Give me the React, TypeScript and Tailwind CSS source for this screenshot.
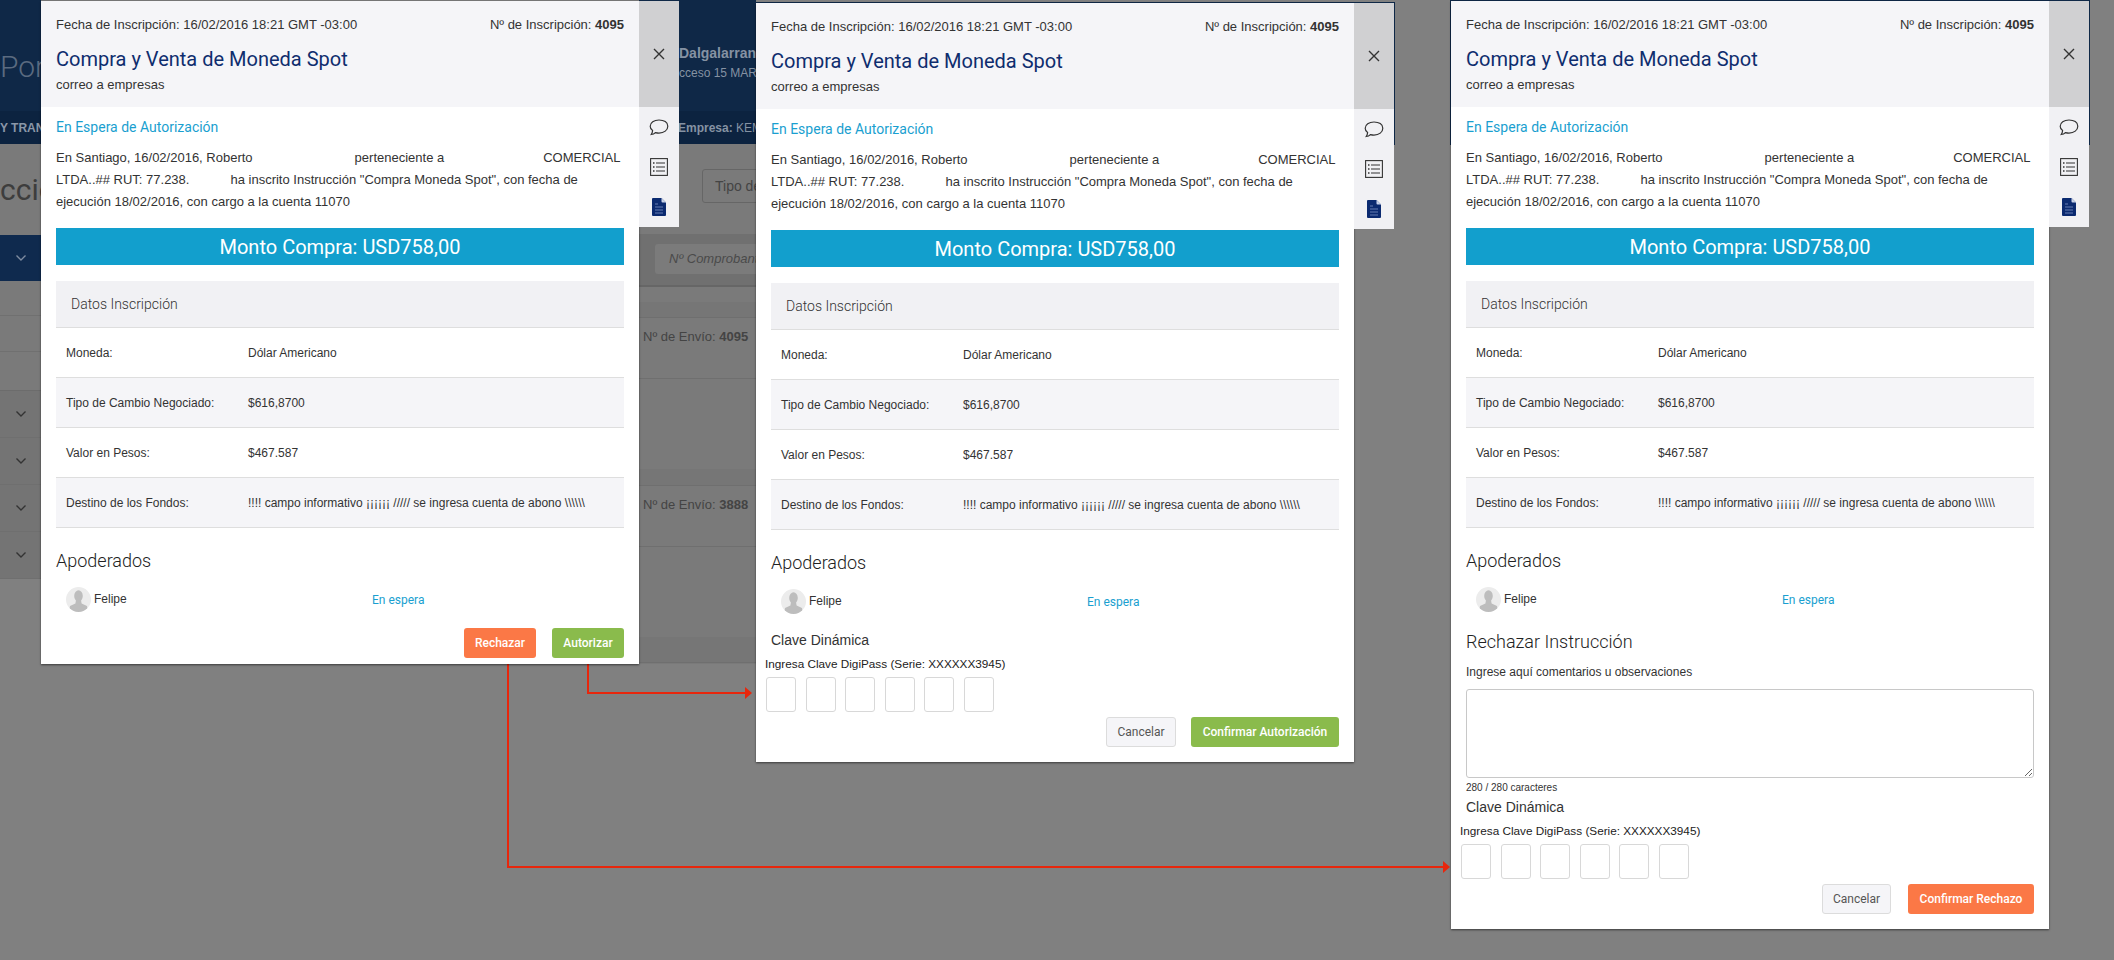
import React from 'react';

const sans = "font-['Liberation_Sans',Arial,sans-serif]";
const roboto = "font-['Roboto',sans-serif]";

const ChevronDown = ({ className }: { className: string }) => (
  <svg className={className} width="12" height="8" viewBox="0 0 12 8" fill="none" stroke="currentColor" strokeWidth="1.4">
    <path d="M1.5 1.5 6 6l4.5-4.5" />
  </svg>
);

const CloseIcon = () => (
  <svg width="14" height="14" viewBox="0 0 14 14" fill="none" stroke="#333" strokeWidth="1.4">
    <path d="M2 2l10 10M12 2 2 12" />
  </svg>
);

const ChatIcon = () => (
  <svg width="20" height="17" viewBox="0 0 20 17" fill="none" stroke="#333" strokeWidth="1.2">
    <path d="M10 1C5 1 1.2 3.5 1.2 7.2c0 1.8 1 3.4 2.4 4.4-.1 1.2-.5 2.6-1.4 3.9 1.9-.1 3.2-.8 4.2-1.9 1.1.3 2.3.5 3.6.5 5 0 8.800-2.900 8.800-6.900S15 1 10 1z" />
  </svg>
);

const ListIcon = () => (
  <svg width="18" height="18" viewBox="0 0 18 18" fill="none" stroke="#333" strokeWidth="1.1">
    <rect x=".6" y=".6" width="16.800" height="16.800" />
    <path d="M6 5h9M6 9h9M6 13h9" />
    <path d="M3 5h1.500M3 9h1.500M3 13h1.500" strokeWidth="1.600" />
  </svg>
);

const DocIcon = () => (
  <svg width="14" height="18" viewBox="0 0 14 18">
    <path d="M0 1a1 1 0 0 1 1-1h8.500L14 4.500V17a1 1 0 0 1-1 1H1a1 1 0 0 1-1-1z" fill="#0b2a70" />
    <path d="M9.500 0v3.500a1 1 0 0 0 1 1H14z" fill="#c9d3ea" />
    <path d="M3 6h3M3 9h8M3 12h8M3 15h8" stroke="#7f93c4" strokeWidth=".8" />
  </svg>
);

const Avatar = () => (
  <svg width="25" height="25" viewBox="0 0 25 25">
    <defs>
      <clipPath id="avatar-clip">
        <circle cx="12.500" cy="12.500" r="12.500" />
      </clipPath>
    </defs>
    <circle cx="12.500" cy="12.500" r="12.500" fill="#ececec" />
    <g clipPath="url(#avatar-clip)" fill="#bdbdbd">
      <ellipse cx="12.500" cy="9" rx="4.300" ry="5.800" />
      <path d="M10 13h5l.6 3.500 5.400 2.500 1 6H3l1-6 5.400-2.500z" />
    </g>
  </svg>
);

const rows = [
  { label: 'Moneda:', value: 'Dólar Americano', shaded: false },
  { label: 'Tipo de Cambio Negociado:', value: '$616,8700', shaded: true },
  { label: 'Valor en Pesos:', value: '$467.587', shaded: false },
  { label: 'Destino de los Fondos:', value: '!!!! campo informativo ¡¡¡¡¡¡ ///// se ingresa cuenta de abono \\\\\\\\\\\\', shaded: true },
];

const DigiPass = () => (
  <>
    <p className={`${sans} text-[14px] leading-5 text-[#333]`}>Clave Dinámica</p>
    <p className={`${sans} mt-[6px] -ml-[6px] text-[11.75px] leading-4 text-[#222]`}>Ingresa Clave DigiPass (Serie: XXXXXX3945)</p>
    <div className="mt-[5px] -ml-[5px] flex gap-[9.6px]">
      {[0, 1, 2, 3, 4, 5].map((i) => (
        <div key={i} className="h-[35px] w-[30px] rounded-[3px] border border-[#d8d8d8] bg-white" />
      ))}
    </div>
  </>
);

const ActionButton = ({ label, className }: { label: string; className: string }) => (
  <button className={`${roboto} h-[30px] rounded-[3px] text-[12px] font-medium text-white ${className}`}>{label}</button>
);

const CancelButton = ({ className }: { className: string }) => (
  <button className={`${roboto} h-[30px] rounded-[3px] border border-[#dcdcdc] bg-[#f5f5f8] text-[12px] text-[#555] ${className}`}>Cancelar</button>
);

const Modal = ({ className, children }: { className: string; children: React.ReactNode }) => (
  <div className={`absolute flex items-start ${className}`}>
    <div className="w-[598px] bg-white shadow-[0_1px_2px_rgba(0,0,0,0.55)]">
      <header className="h-[106px] bg-[#f5f5f8] px-[15px] pt-4">
        <div className={`${sans} flex justify-between text-[13px] leading-4 text-[#333]`}>
          <span>Fecha de Inscripción: 16/02/2016 18:21 GMT -03:00</span>
          <span>
            Nº de Inscripción: <b>4095</b>
          </span>
        </div>
        <h2 className={`${roboto} mt-3 text-[20px] leading-7 text-[#0f2d6e]`}>Compra y Venta de Moneda Spot</h2>
        <p className={`${sans} mt-1 text-[13px] leading-4 text-[#333]`}>correo a empresas</p>
      </header>
      <div className="px-[15px]">
        <p className={`${roboto} mt-[10px] text-[14px] leading-5 text-[#1a9fd0]`}>En Espera de Autorización</p>
        <p className={`${sans} mt-[10px] text-[13px] leading-[22px] text-[#333]`}>
          En Santiago, 16/02/2016, Roberto<span className="inline-block w-[102px]" />perteneciente a<span className="inline-block w-[99px]" />COMERCIAL
          <br />
          LTDA..## RUT: 77.238.<span className="inline-block w-[41px]" />ha inscrito Instrucción "Compra Moneda Spot", con fecha de
          <br />
          ejecución 18/02/2016, con cargo a la cuenta 11070
        </p>
        <div className={`${roboto} mt-[15px] flex h-[37px] items-center justify-center bg-[#129fcd] text-[20px] text-white`}>Monto Compra: USD758,00</div>
        <div className={`${roboto} mt-4 flex h-[47px] items-center border-b border-[#dedede] bg-[#f1f1f4] pl-[15px] text-[14px] font-light text-[#333]`}>Datos Inscripción</div>
        {rows.map((row) => (
          <div key={row.label} className={`${sans} flex h-[50px] items-center border-b border-[#dedede] pl-[10px] text-[12px] text-[#333] ${row.shaded ? 'bg-[#f5f5f8]' : 'bg-white'}`}>
            <span className="w-[182px]">{row.label}</span>
            <span>{row.value}</span>
          </div>
        ))}
        <h3 className={`${roboto} mt-[21px] text-[18px] font-light leading-6 text-[#222]`}>Apoderados</h3>
        <div className="mt-[14px] flex h-[25px] items-center">
          <div className={`${sans} flex w-[316px] items-center gap-[3px] pl-[10px] text-[12px] text-[#333]`}>
            <Avatar />
            <span className="-mt-[2px]">Felipe</span>
          </div>
          <span className={`${roboto} text-[12px] text-[#1a9fd0]`}>En espera</span>
        </div>
        {children}
      </div>
    </div>
    <aside className="w-10">
      <div className="flex h-[106px] items-center justify-center bg-[#d0d0d2]">
        <CloseIcon />
      </div>
      <div className="flex h-[120px] flex-col items-center gap-[22px] bg-[#f1f1f4] pt-3">
        <ChatIcon />
        <ListIcon />
        <DocIcon />
      </div>
    </aside>
  </div>
);

const PageBehind = () => (
  <div className={`${sans} flex h-[664px] w-[756px] bg-[#7a7a7a] text-[#444]`}>
    <div className="w-[41px] whitespace-nowrap">
      <div className={`${roboto} flex h-[111px] items-center bg-[#0f2847] pt-[21px] text-[30px] font-light text-[#5b6b80]`}>Port</div>
      <div className="flex h-[33px] items-center bg-[#0c2340] text-[12px] font-bold text-[#8a97a8]">Y TRANS</div>
      <div className={`${roboto} flex h-[91px] items-center text-[30px] text-[#3d3d3d]`}>ccio</div>
      <div className="flex h-[46px] items-center justify-center bg-[#0f2a4e] text-[#7e8ca0]">
        <ChevronDown className="ml-[1px]" />
      </div>
      <div className="h-[35px] border-b border-[#707070]" />
      <div className="h-[36px] border-b border-[#707070]" />
      <div className="h-[39px] border-b border-[#6c6c6c]" />
      {[0, 1, 2, 3].map((i) => (
        <div key={i} className="flex h-[47px] items-center justify-center border-b border-[#6f6f6f] bg-[#747474] text-[#333]">
          <ChevronDown className="ml-[1px]" />
        </div>
      ))}
      <div className="h-[86px] bg-[#808080]" />
    </div>
    <div className="ml-[598px] w-[117px] whitespace-nowrap">
      <div className="h-[111px] bg-[#0f2847] pl-[40px] pt-[45px] text-[14px] text-[#8592a3]">
        <p className="font-bold leading-4">Dalgalarran</p>
        <p className="mt-1 text-[12px] leading-4">cceso 15 MAR 2</p>
      </div>
      <div className="flex h-[33px] items-center bg-[#0c2340] pl-[39px] text-[12px] text-[#8592a3]">
        <b>Empresa:&nbsp;</b>KEMI
      </div>
      <div className="h-[90px] pl-[63px] pt-[25px]">
        <div className="flex h-[34px] w-[80px] items-center rounded-l-[3px] border border-[#666] pl-3 text-[14px]">Tipo de</div>
      </div>
      <div className="h-[53px] border-b-2 border-[#666] bg-[#707070] pl-4 pt-[10px]">
        <div className="flex h-[30px] items-center rounded-l-[3px] bg-[#7b7b7b] pl-[14px] text-[13px] italic text-[#4a4a4a]">Nº Comprobante</div>
      </div>
      <div className="h-[15px]" />
      <div className="h-[16px] border-b border-[#6f6f6f] bg-[#767676]" />
      <div className="flex h-[61px] items-center border-b border-[#6f6f6f] pb-[23px] pl-1 text-[13px]">
        Nº de Envío:&nbsp;<b>4095</b>
        <span className="ml-[10px] h-[17px] w-px bg-[#444]" />
      </div>
      <div className="h-[90px]" />
      <div className="h-[17px] border-b border-[#6f6f6f] bg-[#767676]" />
      <div className="flex h-[61px] items-center border-b border-[#6f6f6f] pb-[23px] pl-1 text-[13px]">
        Nº de Envío:&nbsp;<b>3888</b>
        <span className="ml-[10px] h-[17px] w-px bg-[#444]" />
      </div>
      <div className="h-[90px]" />
      <div className="h-[26px] border-b border-[#6f6f6f] bg-[#767676]" />
    </div>
  </div>
);

const Arrows = () => (
  <svg className="pointer-events-none absolute left-0 top-0" width="2114" height="960" fill="none">
    <path d="M588 664v29h159" stroke="#e8260c" strokeWidth="2" />
    <path d="M745 687l7 6-7 6z" fill="#e8260c" />
    <path d="M508 664v203h937" stroke="#e8260c" strokeWidth="2" />
    <path d="M1443 861l7 6-7 6z" fill="#e8260c" />
  </svg>
);

export default function App() {
  return (
    <div className="relative h-[960px] w-[2114px] overflow-hidden bg-[#808080]">
      <PageBehind />
      <div className="absolute left-[756px] top-[2px] h-[143px] w-[639px] bg-[#0f2847]" />
      <div className="absolute left-[1450px] top-0 h-[145px] w-[640px] bg-[#0f2847]" />
      <Arrows />
      <Modal className="left-[41px] top-[1px]">
        <div className="mt-4 flex justify-end gap-4 pb-[6px]">
          <ActionButton label="Rechazar" className="w-[72px] bg-[#fb7846]" />
          <ActionButton label="Autorizar" className="w-[72px] bg-[#8abb4c]" />
        </div>
      </Modal>
      <Modal className="left-[756px] top-[3px]">
        <div className="mt-4">
          <DigiPass />
        </div>
        <div className="mt-[5px] flex justify-end gap-[15px] pb-[15px]">
          <CancelButton className="w-[70px]" />
          <ActionButton label="Confirmar Autorización" className="w-[148px] bg-[#8abb4c]" />
        </div>
      </Modal>
      <Modal className="left-[1451px] top-[1px]">
        <h3 className={`${roboto} mt-[18px] text-[18px] font-light leading-6 text-[#222]`}>Rechazar Instrucción</h3>
        <p className={`${sans} mt-[10px] text-[12px] leading-4 text-[#333]`}>Ingrese aquí comentarios u observaciones</p>
        <textarea className="mt-[9px] block h-[89px] w-full rounded-[3px] border border-[#c8c8c8] bg-white" />
        <p className={`${sans} mt-[3px] text-[10px] leading-[14px] text-[#333]`}>280 / 280 caracteres</p>
        <div className="mt-[2px]">
          <DigiPass />
        </div>
        <div className="mt-[5px] flex justify-end gap-[17px] pb-[15px]">
          <CancelButton className="w-[69px]" />
          <ActionButton label="Confirmar Rechazo" className="w-[126px] bg-[#fb7846]" />
        </div>
      </Modal>
    </div>
  );
}
